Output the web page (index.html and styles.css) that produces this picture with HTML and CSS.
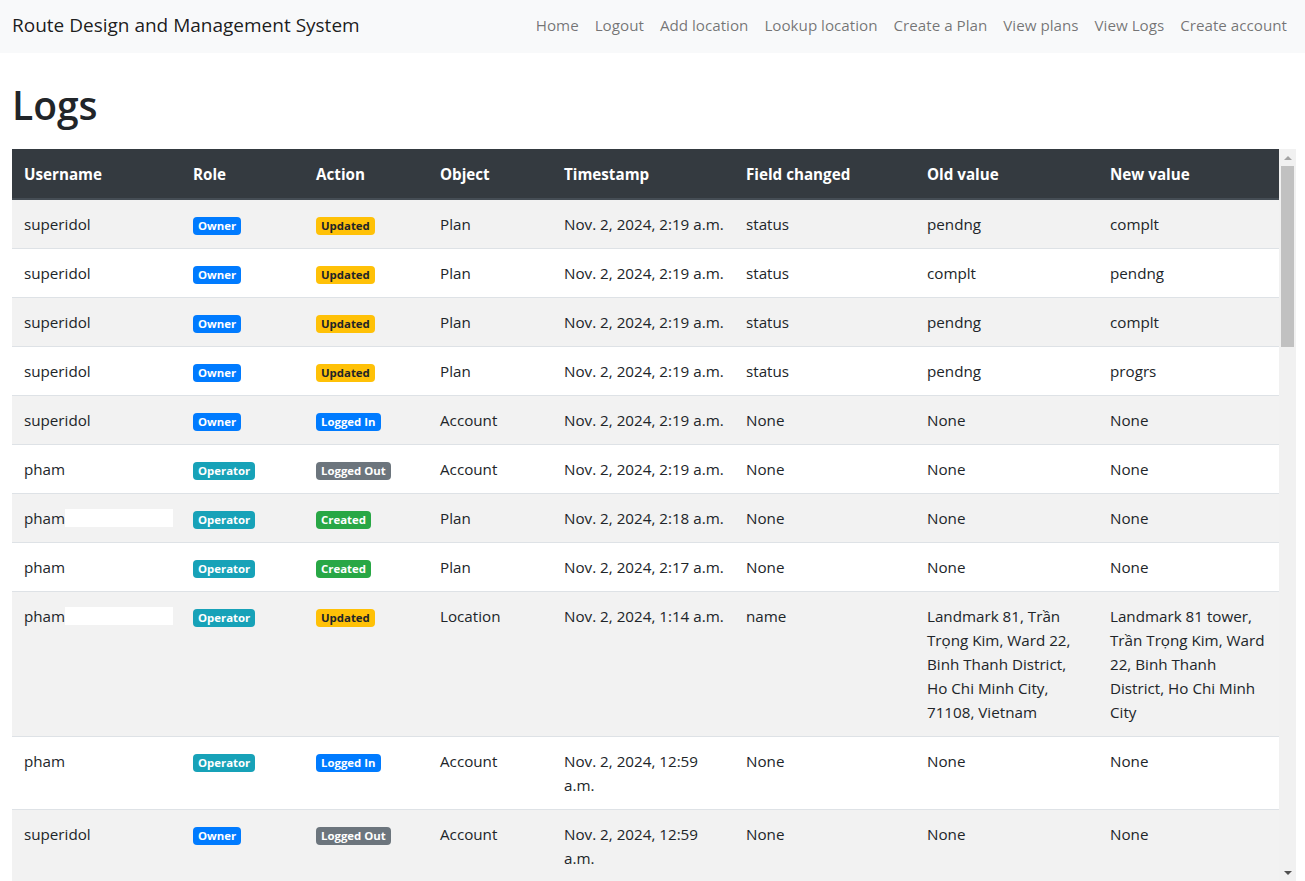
FILE: index.html
```html
<!DOCTYPE html>
<html lang="en">
<head>
<meta charset="utf-8">
<title>Logs</title>
<link rel="stylesheet" href="styles.css">
</head>
<body>
<nav class="navbar">
  <a class="brand" href="#">Route Design and Management System</a>
  <ul class="nav">
    <li><a href="#">Home</a></li>
    <li><a href="#">Logout</a></li>
    <li><a href="#">Add location</a></li>
    <li><a href="#">Lookup location</a></li>
    <li><a href="#">Create a Plan</a></li>
    <li><a href="#">View plans</a></li>
    <li><a href="#">View Logs</a></li>
    <li><a href="#">Create account</a></li>
  </ul>
</nav>
<main class="content">
  <h1 class="title">Logs</h1>
  <div class="table-frame">
  <div class="scroll">
    <table class="logs">
      <colgroup>
        <col class="c-user"><col class="c-role"><col class="c-action"><col class="c-object">
        <col class="c-time"><col class="c-field"><col class="c-old"><col class="c-new">
      </colgroup>
      <thead>
        <tr><th>Username</th><th>Role</th><th>Action</th><th>Object</th><th>Timestamp</th><th>Field changed</th><th>Old value</th><th>New value</th></tr>
      </thead>
      <tbody>
        <tr><td class="u">superidol</td><td><span class="badge b-primary">Owner</span></td><td><span class="badge b-warning">Updated</span></td><td>Plan</td><td class="t">Nov. 2, 2024, 2:19 a.m.</td><td>status</td><td>pendng</td><td>complt</td></tr>
        <tr><td class="u">superidol</td><td><span class="badge b-primary">Owner</span></td><td><span class="badge b-warning">Updated</span></td><td>Plan</td><td class="t">Nov. 2, 2024, 2:19 a.m.</td><td>status</td><td>complt</td><td>pendng</td></tr>
        <tr><td class="u">superidol</td><td><span class="badge b-primary">Owner</span></td><td><span class="badge b-warning">Updated</span></td><td>Plan</td><td class="t">Nov. 2, 2024, 2:19 a.m.</td><td>status</td><td>pendng</td><td>complt</td></tr>
        <tr><td class="u">superidol</td><td><span class="badge b-primary">Owner</span></td><td><span class="badge b-warning">Updated</span></td><td>Plan</td><td class="t">Nov. 2, 2024, 2:19 a.m.</td><td>status</td><td>pendng</td><td>progrs</td></tr>
        <tr><td class="u">superidol</td><td><span class="badge b-primary">Owner</span></td><td><span class="badge b-primary">Logged In</span></td><td>Account</td><td class="t">Nov. 2, 2024, 2:19 a.m.</td><td>None</td><td>None</td><td>None</td></tr>
        <tr><td class="u">pham</td><td><span class="badge b-info">Operator</span></td><td><span class="badge b-secondary">Logged Out</span></td><td>Account</td><td class="t">Nov. 2, 2024, 2:19 a.m.</td><td>None</td><td>None</td><td>None</td></tr>
        <tr><td class="u">pham<span class="redact"></span></td><td><span class="badge b-info">Operator</span></td><td><span class="badge b-success">Created</span></td><td>Plan</td><td class="t">Nov. 2, 2024, 2:18 a.m.</td><td>None</td><td>None</td><td>None</td></tr>
        <tr><td class="u">pham</td><td><span class="badge b-info">Operator</span></td><td><span class="badge b-success">Created</span></td><td>Plan</td><td class="t">Nov. 2, 2024, 2:17 a.m.</td><td>None</td><td>None</td><td>None</td></tr>
        <tr><td class="u">pham<span class="redact"></span></td><td><span class="badge b-info">Operator</span></td><td><span class="badge b-warning">Updated</span></td><td>Location</td><td class="t">Nov. 2, 2024, 1:14 a.m.</td><td>name</td><td class="t">Landmark 81, Trần<br>Trọng Kim, Ward 22,<br>Binh Thanh District,<br>Ho Chi Minh City,<br>71108, Vietnam</td><td class="t">Landmark 81 tower,<br>Trần Trọng Kim, Ward<br>22, Binh Thanh<br>District, Ho Chi Minh<br>City</td></tr>
        <tr><td class="u">pham</td><td><span class="badge b-info">Operator</span></td><td><span class="badge b-primary">Logged In</span></td><td>Account</td><td class="t">Nov. 2, 2024, 12:59<br>a.m.</td><td>None</td><td>None</td><td>None</td></tr>
        <tr><td class="u">superidol</td><td><span class="badge b-primary">Owner</span></td><td><span class="badge b-secondary">Logged Out</span></td><td>Account</td><td class="t">Nov. 2, 2024, 12:59<br>a.m.</td><td>None</td><td>None</td><td>None</td></tr>
        <tr><td class="u">superidol</td><td><span class="badge b-primary">Owner</span></td><td><span class="badge b-primary">Logged In</span></td><td>Account</td><td class="t">Nov. 2, 2024, 12:58<br>a.m.</td><td>None</td><td>None</td><td>None</td></tr>
        <tr><td class="u">pham</td><td><span class="badge b-info">Operator</span></td><td><span class="badge b-secondary">Logged Out</span></td><td>Account</td><td class="t">Nov. 2, 2024, 12:41<br>a.m.</td><td>None</td><td>None</td><td>None</td></tr>
        <tr><td class="u">pham</td><td><span class="badge b-info">Operator</span></td><td><span class="badge b-warning">Updated</span></td><td>Plan</td><td class="t">Nov. 2, 2024, 12:40<br>a.m.</td><td>status</td><td>pendng</td><td>progrs</td></tr>
        <tr><td class="u">pham</td><td><span class="badge b-info">Operator</span></td><td><span class="badge b-success">Created</span></td><td>Plan</td><td class="t">Nov. 2, 2024, 12:38<br>a.m.</td><td>None</td><td>None</td><td>None</td></tr>
        <tr><td class="u">pham</td><td><span class="badge b-info">Operator</span></td><td><span class="badge b-primary">Logged In</span></td><td>Account</td><td class="t">Nov. 2, 2024, 12:37<br>a.m.</td><td>None</td><td>None</td><td>None</td></tr>
        <tr><td class="u">superidol</td><td><span class="badge b-primary">Owner</span></td><td><span class="badge b-secondary">Logged Out</span></td><td>Account</td><td class="t">Nov. 2, 2024, 12:36<br>a.m.</td><td>None</td><td>None</td><td>None</td></tr>
        <tr><td class="u">superidol</td><td><span class="badge b-primary">Owner</span></td><td><span class="badge b-success">Created</span></td><td>Account</td><td class="t">Nov. 2, 2024, 12:35<br>a.m.</td><td>None</td><td>None</td><td>None</td></tr>
        <tr><td class="u">superidol</td><td><span class="badge b-primary">Owner</span></td><td><span class="badge b-primary">Logged In</span></td><td>Account</td><td class="t">Nov. 2, 2024, 12:30<br>a.m.</td><td>None</td><td>None</td><td>None</td></tr>
        <tr><td class="u">superidol</td><td><span class="badge b-primary">Owner</span></td><td><span class="badge b-secondary">Logged Out</span></td><td>Account</td><td class="t">Nov. 1, 2024, 6:12 p.m.</td><td>None</td><td>None</td><td>None</td></tr>
        <tr><td class="u">superidol</td><td><span class="badge b-primary">Owner</span></td><td><span class="badge b-warning">Updated</span></td><td>Plan</td><td class="t">Nov. 1, 2024, 6:10 p.m.</td><td>status</td><td>progrs</td><td>complt</td></tr>
        <tr><td class="u">superidol</td><td><span class="badge b-primary">Owner</span></td><td><span class="badge b-warning">Updated</span></td><td>Plan</td><td class="t">Nov. 1, 2024, 6:09 p.m.</td><td>status</td><td>pendng</td><td>progrs</td></tr>
        <tr><td class="u">superidol</td><td><span class="badge b-primary">Owner</span></td><td><span class="badge b-success">Created</span></td><td>Plan</td><td class="t">Nov. 1, 2024, 6:05 p.m.</td><td>None</td><td>None</td><td>None</td></tr>
        <tr><td class="u">superidol</td><td><span class="badge b-primary">Owner</span></td><td><span class="badge b-success">Created</span></td><td>Location</td><td class="t">Nov. 1, 2024, 6:01 p.m.</td><td>None</td><td>None</td><td>None</td></tr>
        <tr><td class="u">superidol</td><td><span class="badge b-primary">Owner</span></td><td><span class="badge b-primary">Logged In</span></td><td>Account</td><td class="t">Nov. 1, 2024, 5:58 p.m.</td><td>None</td><td>None</td><td>None</td></tr>
        <tr><td class="u">pham</td><td><span class="badge b-info">Operator</span></td><td><span class="badge b-secondary">Logged Out</span></td><td>Account</td><td class="t">Nov. 1, 2024, 5:40 p.m.</td><td>None</td><td>None</td><td>None</td></tr>
        <tr><td class="u">pham</td><td><span class="badge b-info">Operator</span></td><td><span class="badge b-success">Created</span></td><td>Location</td><td class="t">Nov. 1, 2024, 5:32 p.m.</td><td>None</td><td>None</td><td>None</td></tr>
        <tr><td class="u">pham</td><td><span class="badge b-info">Operator</span></td><td><span class="badge b-success">Created</span></td><td>Location</td><td class="t">Nov. 1, 2024, 5:30 p.m.</td><td>None</td><td>None</td><td>None</td></tr>
        <tr><td class="u">pham</td><td><span class="badge b-info">Operator</span></td><td><span class="badge b-primary">Logged In</span></td><td>Account</td><td class="t">Nov. 1, 2024, 5:21 p.m.</td><td>None</td><td>None</td><td>None</td></tr>
        <tr><td class="u">superidol</td><td><span class="badge b-primary">Owner</span></td><td><span class="badge b-secondary">Logged Out</span></td><td>Account</td><td class="t">Nov. 1, 2024, 4:50 p.m.</td><td>None</td><td>None</td><td>None</td></tr>
        <tr><td class="u">superidol</td><td><span class="badge b-primary">Owner</span></td><td><span class="badge b-success">Created</span></td><td>Account</td><td class="t">Nov. 1, 2024, 4:48 p.m.</td><td>None</td><td>None</td><td>None</td></tr>
        <tr><td class="u">superidol</td><td><span class="badge b-primary">Owner</span></td><td><span class="badge b-primary">Logged In</span></td><td>Account</td><td class="t">Nov. 1, 2024, 4:45 p.m.</td><td>None</td><td>None</td><td>None</td></tr>
        <tr><td class="u">superidol</td><td><span class="badge b-primary">Owner</span></td><td><span class="badge b-secondary">Logged Out</span></td><td>Account</td><td class="t">Nov. 1, 2024, 2:02 p.m.</td><td>None</td><td>None</td><td>None</td></tr>
        <tr><td class="u">superidol</td><td><span class="badge b-primary">Owner</span></td><td><span class="badge b-warning">Updated</span></td><td>Plan</td><td class="t">Nov. 1, 2024, 2:01 p.m.</td><td>status</td><td>pendng</td><td>complt</td></tr>
        <tr><td class="u">superidol</td><td><span class="badge b-primary">Owner</span></td><td><span class="badge b-success">Created</span></td><td>Plan</td><td class="t">Nov. 1, 2024, 1:55 p.m.</td><td>None</td><td>None</td><td>None</td></tr>
        <tr><td class="u">superidol</td><td><span class="badge b-primary">Owner</span></td><td><span class="badge b-primary">Logged In</span></td><td>Account</td><td class="t">Nov. 1, 2024, 1:50 p.m.</td><td>None</td><td>None</td><td>None</td></tr>
        <tr><td class="u">pham</td><td><span class="badge b-info">Operator</span></td><td><span class="badge b-secondary">Logged Out</span></td><td>Account</td><td class="t">Nov. 1, 2024, 1:20 p.m.</td><td>None</td><td>None</td><td>None</td></tr>
        <tr><td class="u">pham</td><td><span class="badge b-info">Operator</span></td><td><span class="badge b-primary">Logged In</span></td><td>Account</td><td class="t">Nov. 1, 2024, 1:02 p.m.</td><td>None</td><td>None</td><td>None</td></tr>
        <tr><td class="u">superidol</td><td><span class="badge b-primary">Owner</span></td><td><span class="badge b-secondary">Logged Out</span></td><td>Account</td><td class="t">Nov. 1, 2024, 12:44<br>p.m.</td><td>None</td><td>None</td><td>None</td></tr>
        <tr><td class="u">superidol</td><td><span class="badge b-primary">Owner</span></td><td><span class="badge b-primary">Logged In</span></td><td>Account</td><td class="t">Nov. 1, 2024, 12:40<br>p.m.</td><td>None</td><td>None</td><td>None</td></tr>
        <tr><td class="u">superidol</td><td><span class="badge b-primary">Owner</span></td><td><span class="badge b-success">Created</span></td><td>Account</td><td class="t">Nov. 1, 2024, 9:10 a.m.</td><td>None</td><td>None</td><td>None</td></tr>
        <tr><td class="u">superidol</td><td><span class="badge b-primary">Owner</span></td><td><span class="badge b-primary">Logged In</span></td><td>Account</td><td class="t">Nov. 1, 2024, 9:05 a.m.</td><td>None</td><td>None</td><td>None</td></tr>
      </tbody>
    </table>
  </div>
  <div class="scrollbar" aria-hidden="true">
    <div class="sb-btn"><span class="sb-arrow-up"></span></div>
    <div class="sb-track"><div class="sb-thumb"></div></div>
    <div class="sb-btn"><span class="sb-arrow-down"></span></div>
  </div>
  </div>
</main>
</body>
</html>
```

FILE: styles.css
```css
* { box-sizing: border-box; }

body {
  margin: 0;
  font-family: "Open Sans", "Noto Sans", "Liberation Sans", sans-serif;
  font-size: 15.2px;
  line-height: 24px;
  color: #212529;
  background: #fff;
}

.navbar {
  height: 53px;
  background: #f8f9fa;
  display: flex;
  align-items: center;
  justify-content: space-between;
  padding: 0 10px 3px 12px;
}

.brand {
  font-size: 19px;
  line-height: 30px;
  color: rgba(0, 0, 0, 0.9);
  text-decoration: none;
}

.nav {
  display: flex;
  list-style: none;
  margin: 0;
  padding: 0;
}

.nav a {
  display: block;
  padding: 0 8px;
  color: rgba(0, 0, 0, 0.55);
  text-decoration: none;
}

.content {
  padding: 0 9px 0 12px;
}

.title {
  margin: 28px 0 20px;
  font-size: 39px;
  line-height: 48px;
  font-weight: 600;
}

.table-frame {
  display: flex;
  height: 732px;
}

.scroll {
  flex: 1;
  min-width: 0;
  overflow: hidden;
}

.scrollbar {
  width: 17px;
  flex: none;
  display: flex;
  flex-direction: column;
  background: #f1f1f1;
}

.sb-btn {
  height: 17px;
  flex: none;
  display: flex;
  align-items: center;
  justify-content: center;
}

.sb-arrow-up {
  width: 0;
  height: 0;
  border-left: 4px solid transparent;
  border-right: 4px solid transparent;
  border-bottom: 4px solid #a3a3a3;
}

.sb-arrow-down {
  width: 0;
  height: 0;
  border-left: 4px solid transparent;
  border-right: 4px solid transparent;
  border-top: 4px solid #505050;
}

.sb-track {
  flex: 1;
  padding: 0 2px;
}

.sb-thumb {
  height: 181px;
  background: #c1c1c1;
}

.logs {
  width: 100%;
  border-collapse: collapse;
  table-layout: fixed;
}

.c-user { width: 169px; }
.c-role { width: 123px; }
.c-action { width: 124px; }
.c-object { width: 124px; }
.c-time { width: 182px; }
.c-field { width: 181px; }
.c-old { width: 183px; }
.c-new { width: 181px; }

.logs th,
.logs td {
  padding: 12px;
  text-align: left;
  vertical-align: top;
  border-top: 1px solid #dee2e6;
}

.logs thead th {
  background: #343a40;
  color: #fff;
  font-weight: 700;
  vertical-align: bottom;
  border-top: 0;
  border-bottom: 2px solid #454d55;
  padding-top: 13px;
}

.logs tbody tr:nth-of-type(odd) {
  background: #f2f2f2;
}

.logs .u,
.logs .t {
  white-space: nowrap;
}

.badge {
  display: inline-block;
  padding: 3px 5px;
  font-size: 11.4px;
  font-weight: 700;
  line-height: 12px;
  white-space: nowrap;
  border-radius: 4px;
  vertical-align: baseline;
}

.b-primary { background: #007bff; color: #fff; }
.b-info { background: #17a2b8; color: #fff; }
.b-warning { background: #ffc107; color: #212529; }
.b-success { background: #28a745; color: #fff; }
.b-secondary { background: #6c757d; color: #fff; }

.redact {
  display: inline-block;
  width: 108px;
  height: 18px;
  background: #fff;
  vertical-align: -3px;
}
```
